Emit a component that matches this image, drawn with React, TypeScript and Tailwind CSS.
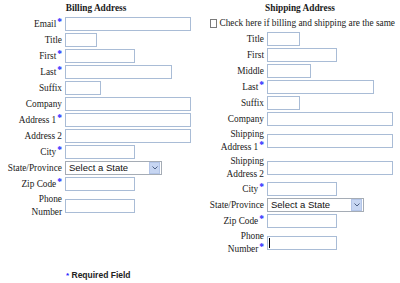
import React from 'react'

type Field = {
  label: string[]
  width: number
  required?: boolean
  kind?: 'text' | 'select'
  caret?: boolean
}

const billing: Field[] = [
  { label: ['Email'], width: 126, required: true },
  { label: ['Title'], width: 32 },
  { label: ['First'], width: 70, required: true },
  { label: ['Last'], width: 107, required: true },
  { label: ['Suffix'], width: 36 },
  { label: ['Company'], width: 126 },
  { label: ['Address 1'], width: 126, required: true },
  { label: ['Address 2'], width: 126 },
  { label: ['City'], width: 70, required: true },
  { label: ['State/Province'], width: 97, kind: 'select' },
  { label: ['Zip Code'], width: 70, required: true },
  { label: ['Phone', 'Number'], width: 70 },
]

const shipping: Field[] = [
  { label: ['Title'], width: 33 },
  { label: ['First'], width: 70 },
  { label: ['Middle'], width: 44 },
  { label: ['Last'], width: 107, required: true },
  { label: ['Suffix'], width: 33 },
  { label: ['Company'], width: 126 },
  { label: ['Shipping', 'Address 1'], width: 126, required: true },
  { label: ['Shipping', 'Address 2'], width: 126 },
  { label: ['City'], width: 70, required: true },
  { label: ['State/Province'], width: 97, kind: 'select' },
  { label: ['Zip Code'], width: 70, required: true },
  { label: ['Phone', 'Number'], width: 70, required: true, caret: true },
]

function Star() {
  return <span className="text-[#2424ff] text-[9.5px] font-bold leading-none align-top ml-[1px]">*</span>
}

function StateSelect({ width }: { width: number }) {
  return (
    <div
      className="h-[14px] border border-[#a5acb5] bg-white flex items-center justify-between"
      style={{ width }}
    >
      <span className="pl-[3px] text-[9.5px] leading-none text-[#111] font-['Liberation_Sans',Arial,sans-serif]">
        Select a State
      </span>
      <span className="h-[12px] w-[11px] mr-[1px] bg-[#c7d6f2] border border-[#b3c5e8] flex items-center justify-center">
        <svg width="6" height="4" viewBox="0 0 6 4">
          <path d="M0.5 0.5 L3 3 L5.5 0.5" fill="none" stroke="#4d6185" strokeWidth="1" />
        </svg>
      </span>
    </div>
  )
}

function Row({ field, labelWidth }: { field: Field; labelWidth: number }) {
  const twoLine = field.label.length > 1
  return (
    <div className={`flex items-center gap-[3px] ${twoLine ? 'h-[27px]' : 'h-[16px]'}`}>
      <div className="text-right leading-[13px] shrink-0" style={{ width: labelWidth }}>
        {field.label.map((line, i) => (
          <div key={i} className="whitespace-nowrap">
            {line}
            {field.required && i === field.label.length - 1 && <Star />}
          </div>
        ))}
      </div>
      {field.kind === 'select' ? (
        <StateSelect width={field.width} />
      ) : (
        <div
          className="h-[14px] border border-[#a9bcd6] bg-white flex items-center"
          style={{ width: field.width }}
        >
          {field.caret && <span className="ml-[1px] h-[10px] w-px bg-black" />}
        </div>
      )}
    </div>
  )
}

export default function App() {
  return (
    <div className="w-[400px] h-[283px] bg-white text-[#1a1a1a] font-['Liberation_Serif','Times_New_Roman',serif] text-[9.3px] overflow-hidden">
      <div className="flex items-start">
        <div className="w-[192px]">
          <div className="h-[16px] leading-[16px] text-center font-bold">Billing Address</div>
          {billing.map((f, i) => (
            <Row key={i} field={f} labelWidth={62} />
          ))}
        </div>
        <div className="w-[190px] ml-[13px]">
          <div className="h-[16px] leading-[16px] text-center font-bold">Shipping Address</div>
          <div className="h-[15px] flex items-center pl-[5px] gap-[2px]">
            <span className="w-[9px] h-[9px] border border-[#7b7b7b] bg-white" />
            <span className="whitespace-nowrap">Check here if billing and shipping are the same</span>
          </div>
          {shipping.map((f, i) => (
            <Row key={i} field={f} labelWidth={59} />
          ))}
        </div>
      </div>
      <div className="mt-[14px] h-[11px] leading-[11px] pl-[66px] font-['Liberation_Sans',Arial,sans-serif] font-bold text-[8.5px] text-[#222]">
        <span className="text-[#2424ff] text-[8px] align-top">*</span> Required Field
      </div>
    </div>
  )
}
